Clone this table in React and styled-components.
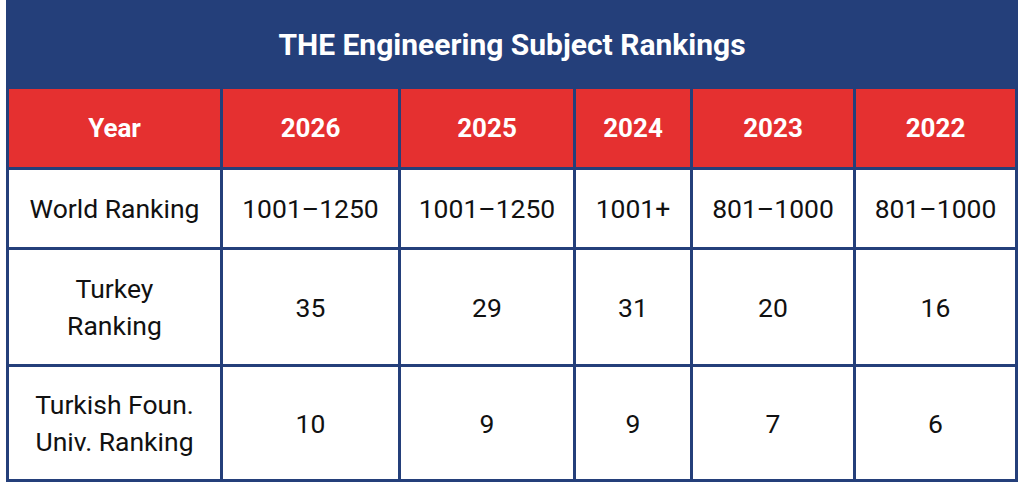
import React from 'react';
import styled, { createGlobalStyle } from 'styled-components';

const GlobalStyle = createGlobalStyle`
  html, body {
    margin: 0;
    padding: 0;
    background: #ffffff;
  }
  body {
    font-family: Roboto, "Liberation Sans", Arial, sans-serif;
  }
`;

const years = ['2026', '2025', '2024', '2023', '2022'];

const rows = [
  { label: 'World Ranking', values: ['1001–1250', '1001–1250', '1001+', '801–1000', '801–1000'], height: 77 },
  { label: ['Turkey', 'Ranking'], values: ['35', '29', '31', '20', '16'], height: 114 },
  { label: ['Turkish Foun.', 'Univ. Ranking'], values: ['10', '9', '9', '7', '6'], height: 112 },
];

const App = () => (
  <Page>
    <GlobalStyle />
    <Table>
      <Title>THE Engineering Subject Rankings</Title>
      <HeadCell>Year</HeadCell>
      {years.map((y) => (
        <HeadCell key={y}>{y}</HeadCell>
      ))}
      {rows.map((row, i) => (
        <React.Fragment key={i}>
          <Cell $h={row.height}>
            {Array.isArray(row.label)
              ? row.label.map((l) => <span key={l}>{l}</span>)
              : row.label}
          </Cell>
          {row.values.map((v, j) => (
            <Cell key={j} $h={row.height}>{v}</Cell>
          ))}
        </React.Fragment>
      ))}
    </Table>
  </Page>
);

const Page = styled.div`
  padding: 0 6px;
  width: 1024px;
  box-sizing: border-box;
`;

const Table = styled.div`
  display: grid;
  grid-template-columns: 211px 175px 172px 114px 160px 159px;
  gap: 3px;
  padding: 0 3px 3px 3px;
  background: #243f7a;
  width: 1012px;
  box-sizing: border-box;
`;

const Title = styled.div`
  grid-column: 1 / -1;
  height: 86px;
  display: flex;
  align-items: center;
  justify-content: center;
  color: #ffffff;
  font-weight: 700;
  font-size: 30px;
  padding-top: 3px;
  box-sizing: border-box;
`;

const HeadCell = styled.div`
  height: 78px;
  background: #e53030;
  color: #ffffff;
  font-weight: 700;
  font-size: 26px;
  display: flex;
  align-items: center;
  justify-content: center;
`;

const Cell = styled.div`
  height: ${(p) => p.$h}px;
  background: #ffffff;
  color: #111111;
  font-size: 26.5px;
  line-height: 37px;
  display: flex;
  flex-direction: column;
  align-items: center;
  justify-content: center;
  text-align: center;
`;

export default App;
